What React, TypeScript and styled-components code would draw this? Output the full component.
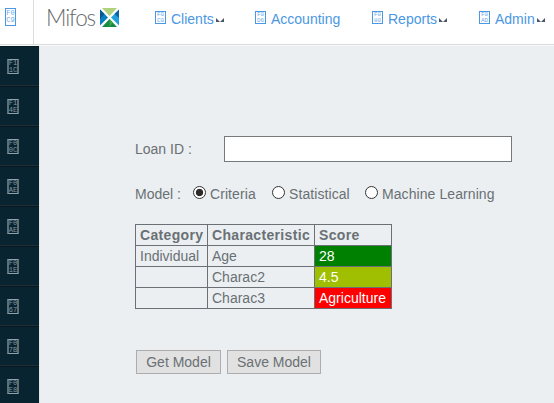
import React from 'react';
import styled, { createGlobalStyle } from 'styled-components';

const Global = createGlobalStyle`
  * { box-sizing: border-box; }
  body {
    margin: 0;
    background: #ebeff2;
    color: #6a7074;
    font: 14px/20px "Liberation Sans", Arial, sans-serif;
    overflow: hidden;
  }
`;

const Page = styled.div`
  display: flex;
  flex-direction: column;
  height: 403px;
  overflow: hidden;
`;

const Header = styled.header`
  display: flex;
  height: 46px;
  flex: none;
  background: linear-gradient(#fff 44px, #d9dbdd 44px, #d9dbdd 45px, #f8f9fa 45px);
`;

const Toggle = styled.div`
  width: 34px;
  height: 44px;
  border-right: 1px solid #dcdcdc;
  padding: 8px 0 0 5px;
`;

const Brand = styled.a`
  display: flex;
  width: 121px;
  padding: 0 0 0 12px;
`;

const BrandName = styled.span`
  width: 54px;
  height: 36px;
  font: 300 22.5px/36px Lato, sans-serif;
  letter-spacing: -1.1px;
  color: #686b6d;
`;

const Logo = styled.svg`
  flex: none;
  margin-top: 8px;
`;

const NavItem = styled.a<{ $width: number }>`
  display: flex;
  align-items: flex-start;
  width: ${p => p.$width}px;
  padding-top: 11px;
  color: #4a97e3;
  white-space: nowrap;
`;

const NavLabel = styled.span`
  margin: -2px 2px 0 5px;
`;

const Caret = styled.svg`
  margin-top: 7px;
  flex: none;
`;

const Box = styled.span<{ $w: number; $h: number; $dim?: boolean; $color: string }>`
  display: flex;
  flex: none;
  flex-direction: column;
  align-items: center;
  justify-content: center;
  width: ${p => p.$w}px;
  height: ${p => p.$h}px;
  border: 1px solid ${p => p.$color};
  border-width: ${p => (p.$dim ? '1px 2px' : '1px')};
  border-color: ${p => (p.$dim ? '#92a5ad #5a6f78' : p.$color)};
  color: ${p => (p.$dim ? p.$color : '#6faaeb')};
  font-family: "Liberation Mono", monospace;
  font-size: ${p => (p.$h > 13 ? 7 : 6)}px;
  line-height: ${p => (p.$h > 15 ? 7 : p.$h > 13 ? 6.5 : 5.5)}px;
`;

const Code = styled.span`
  display: block;
  overflow: hidden;
`;

const Body = styled.div`
  display: flex;
  flex: 1;
`;

const Sidebar = styled.nav`
  width: 40px;
  background: #082431;
  border-right: 1px solid #e0e4e7;
`;

const SideItem = styled.div`
  height: 40px;
  padding: 12px 0 0 7px;
  border-top: 1px solid #051a20;
  border-bottom: 1px solid #222d35;
`;

const Content = styled.main`
  padding: 90px 0 0 95px;
`;

const Field = styled.div`
  display: flex;
  align-items: center;
  height: 26px;
`;

const FieldLabel = styled.label`
  width: 89px;
`;

const TextInput = styled.input`
  width: 288px;
  height: 26px;
  border: 1px solid #767a7c;
  border-radius: 0;
  background: #fff;
  outline: 0;
`;

const ModelRow = styled.div`
  display: flex;
  align-items: flex-start;
  height: 40px;
  margin-top: 22px;
`;

const ModelLabel = styled.span`
  width: 58px;
`;

const Option = styled.label<{ $width: number }>`
  display: flex;
  width: ${p => p.$width}px;
  gap: 4px;
  white-space: nowrap;
  letter-spacing: 0.08px;
`;

const Radio = styled.input`
  appearance: none;
  flex: none;
  width: 13px;
  height: 13px;
  margin: 2px 0 0;
  border: 1px solid #333;
  border-radius: 50%;
  background: #fff;
  &:checked {
    background: radial-gradient(circle, #2b2b2b 3.3px, #fff 4.1px);
  }
`;

const Table = styled.table`
  width: 257px;
  table-layout: fixed;
  border-collapse: collapse;
  line-height: 20px;
`;

const Cell = styled.td<{ $bg?: string }>`
  height: 21px;
  padding: 0 0 0 4px;
  border: 1px solid #6a7074;
  text-align: left;
  ${p => p.$bg && `background: ${p.$bg}; color: #fff;`}
`;

const HeadCell = styled(Cell)`
  letter-spacing: 0.33px;
`;

const Buttons = styled.div`
  display: flex;
  gap: 6px;
  margin: 41px 0 0 1px;
`;

const Button = styled.button<{ $width: number }>`
  width: ${p => p.$width}px;
  height: 24px;
  padding: 0;
  border: 1px solid #adadad;
  background: #e1e1e1;
  color: #6a7074;
  font: inherit;
  line-height: 22px;
`;

function CodeBox({ code, w, h, color, dim }: { code: string; w: number; h: number; color: string; dim?: boolean }) {
  return (
    <Box $w={w} $h={h} $color={color} $dim={dim}>
      <Code>{code.slice(0, 2)}</Code>
      <Code>{code.slice(2)}</Code>
    </Box>
  );
}

const navItems = [
  { code: 'F0C0', label: 'Clients', width: 100, caret: true },
  { code: 'F0D6', label: 'Accounting', width: 117 },
  { code: 'F080', label: 'Reports', width: 107, caret: true },
  { code: 'F0AD', label: 'Admin', width: 74, caret: true },
];

const sideItems = ['F11C', 'F14E', 'F00C', 'F0AE', 'F0AE', 'F01E', 'F067', 'F07B', 'F0E8'];

const options = [
  { label: 'Criteria', width: 79 },
  { label: 'Statistical', width: 93 },
  { label: 'Machine Learning', width: 135 },
];

const rows = [
  { category: 'Individual', name: 'Age', score: '28', bg: '#008000' },
  { category: '', name: 'Charac2', score: '4.5', bg: '#9fbf00' },
  { category: '', name: 'Charac3', score: 'Agriculture', bg: '#ff0000' },
];

export default function App() {
  return (
    <Page>
      <Global />
      <Header>
        <Toggle><CodeBox code="F0C9" w={11} h={18} color="#4a97e3" /></Toggle>
        <Brand>
          <BrandName>Mifos</BrandName>
          <Logo width="19" height="19" viewBox="0 0 19 19">
            <path d="M2 0H17L9.5 8Z" fill="#b0d27c" />
            <path d="M0 1.5V17.5L8 9.5Z" fill="#0a7fc2" />
            <path d="M0 1.5L4.5 6L0 11Z" fill="#075b91" />
            <path d="M19 1.5V17.5L11 9.5Z" fill="#22a0de" />
            <path d="M19 1.5L14.5 6L19 10Z" fill="#0b65a4" />
            <path d="M9.5 11L17 19H2Z" fill="#158a45" />
            <path d="M9.5 11L13 14.7L9.5 19Z" fill="#3fa548" />
          </Logo>
        </Brand>
        {navItems.map(n => (
          <NavItem key={n.label} $width={n.width}>
            <CodeBox code={n.code} w={11} h={13} color="#4a97e3" />
            <NavLabel>{n.label}</NavLabel>
            {n.caret && (
              <Caret width="8" height="4" viewBox="0 0 8 4">
                <path d="M0 0L4 4H0ZM8 0V4H4Z" fill="#4b5468" />
              </Caret>
            )}
          </NavItem>
        ))}
      </Header>
      <Body>
        <Sidebar>
          {sideItems.map((code, i) => (
            <SideItem key={i}><CodeBox code={code} w={12} h={15} color="#8397a0" dim /></SideItem>
          ))}
        </Sidebar>
        <Content>
          <Field>
            <FieldLabel htmlFor="loan">Loan ID :</FieldLabel>
            <TextInput id="loan" />
          </Field>
          <ModelRow>
            <ModelLabel>Model :</ModelLabel>
            {options.map((o, i) => (
              <Option key={o.label} $width={o.width}>
                <Radio type="radio" name="model" defaultChecked={i === 0} />
                {o.label}
              </Option>
            ))}
          </ModelRow>
          <Table>
            <colgroup><col width="72" /><col width="107" /><col width="77" /></colgroup>
            <thead>
              <tr><HeadCell as="th">Category</HeadCell><HeadCell as="th">Characteristic</HeadCell><HeadCell as="th">Score</HeadCell></tr>
            </thead>
            <tbody>
              {rows.map(r => (
                <tr key={r.name}><Cell>{r.category}</Cell><Cell>{r.name}</Cell><Cell $bg={r.bg}>{r.score}</Cell></tr>
              ))}
            </tbody>
          </Table>
          <Buttons>
            <Button $width={85}>Get Model</Button>
            <Button $width={94}>Save Model</Button>
          </Buttons>
        </Content>
      </Body>
    </Page>
  );
}
